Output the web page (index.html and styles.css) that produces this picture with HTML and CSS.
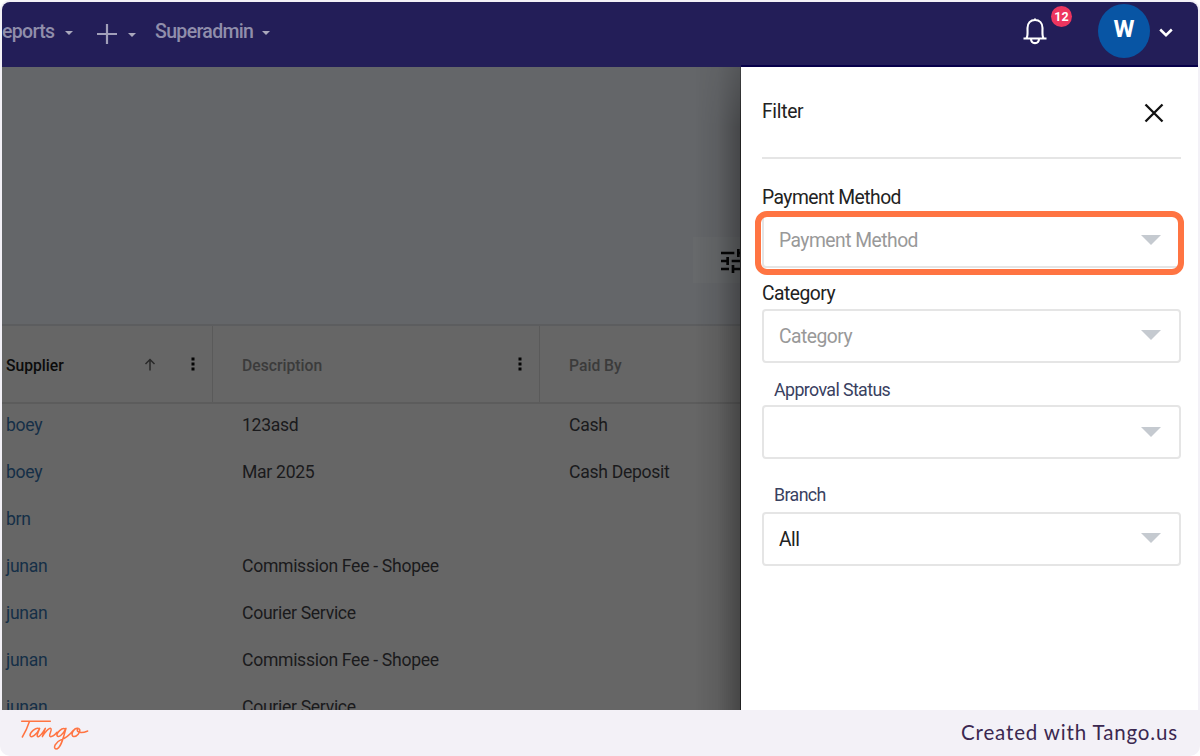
FILE: index.html
```html
<!DOCTYPE html>
<html lang="en">
<head>
<meta charset="utf-8">
<title>Filter</title>
<link rel="stylesheet" href="styles.css">
</head>
<body>
<div class="frame">
  <div class="app">
    <header class="nav">
      <div class="menu">
        <span class="menu-item reports">eports</span><i class="caret"></i>
        <svg class="plus" width="20" height="20" viewBox="0 0 20 20"><path d="M10 0V20M0 10H20"/></svg><i class="caret caret-low"></i>
        <span class="menu-item admin">Superadmin</span><i class="caret"></i>
      </div>
      <div class="account">
        <div class="bell">
          <svg width="24" height="28" viewBox="0 0 24 28"><path d="M.5 21.500H23.500M3.500 21C5 19 4.500 16 4.500 11C4.500 6 7.500 3 12 3S19.500 6 19.500 11C19.500 16 19 19 20.500 21M12 3V1.500M8 22C8.200 27.500 15.800 27.500 16 22"/></svg>
          <span class="badge">12</span>
        </div>
        <div class="avatar">W</div>
        <svg class="chevron" width="14" height="9" viewBox="0 0 14 9"><path d="M1.200 1.500L7 7.200L12.800 1.500"/></svg>
      </div>
    </header>
    <div class="content">
      <main class="page">
        <div class="toolbar">
          <div class="tune"><svg width="24" height="24" viewBox="3 3 18 18"><path d="M3 17v2h6v-2H3zM3 5v2h10V5H3zm10 16v-2h8v-2h-8v-2h-2v6h2zM7 9v2H3v2h4v2h2V9H7zm14 4v-2H11v2h10zm-6-4h2V7h4V5h-4V3h-2v6z"/></svg></div>
        </div>
        <div class="row head">
          <div class="cell supplier"><span>Supplier</span>
            <svg class="arrow" width="12" height="13" viewBox="0 0 12 13"><path d="M6 12.500V1.500M1.500 6L6 1.500L10.500 6"/></svg>
            <svg class="dots" width="4" height="14" viewBox="0 0 4 14"><path d="M.5 .5h3v3h-3zM.5 5.500h3v3h-3zM.5 10.500h3v3h-3z"/></svg></div>
          <div class="cell desc"><span>Description</span>
            <svg class="dots" width="4" height="14" viewBox="0 0 4 14"><path d="M.5 .5h3v3h-3zM.5 5.500h3v3h-3zM.5 10.500h3v3h-3z"/></svg></div>
          <div class="cell paid"><span>Paid By</span></div>
        </div>
        <div class="row"><a class="cell supplier">boey</a><div class="cell desc">123asd</div><div class="cell paid">Cash</div></div>
        <div class="row"><a class="cell supplier">boey</a><div class="cell desc">Mar 2025</div><div class="cell paid">Cash Deposit</div></div>
        <div class="row"><a class="cell supplier">brn</a><div class="cell desc"></div><div class="cell paid"></div></div>
        <div class="row"><a class="cell supplier">junan</a><div class="cell desc">Commission Fee - Shopee</div><div class="cell paid"></div></div>
        <div class="row"><a class="cell supplier">junan</a><div class="cell desc">Courier Service</div><div class="cell paid"></div></div>
        <div class="row"><a class="cell supplier">junan</a><div class="cell desc">Commission Fee - Shopee</div><div class="cell paid"></div></div>
        <div class="row"><a class="cell supplier">junan</a><div class="cell desc">Courier Service</div><div class="cell paid"></div></div>
      </main>
      <aside class="panel">
        <div class="panel-head"><span class="title">Filter</span>
          <svg width="20" height="20" viewBox="0 0 20 20"><path d="M1.500 1.500L18.500 18.500M18.500 1.500L1.500 18.500"/></svg></div>
        <div class="label">Payment Method</div>
        <div class="select highlight"><span class="hint">Payment Method</span><i class="tri"></i></div>
        <div class="label category">Category</div>
        <div class="select"><span class="hint">Category</span><i class="tri"></i></div>
        <div class="sub approval">Approval Status</div>
        <div class="select low"><span></span><i class="tri"></i></div>
        <div class="sub branch">Branch</div>
        <div class="select"><span>All</span><i class="tri"></i></div>
      </aside>
    </div>
  </div>
  <footer class="footer">
    <svg class="logo" width="70" height="34" viewBox="60 235 210 102"><path d="M65 245H151M88 246C82 265 74 280 67 292M118 267C108 261 90 278 90 287C93 299 112 283 119 266C113 280 108 292 115 291C122 290 130 276 136 266L127 291C134 279 148 262 153 267C157 272 143 290 152 291C159 291 167 283 171 278M196 268C186 262 169 280 171 288C175 297 190 283 198 266C192 285 184 328 168 328C158 326 166 307 184 300C201 294 212 282 221 271M234 266C221 264 212 284 219 290C229 294 244 276 238 268C231 264 228 276 240 278C250 280 258 276 263 274"/></svg>
    <span class="credit">Created with Tango.us</span>
  </footer>
</div>
</body>
</html>
```
FILE: styles.css
```css
* { box-sizing: border-box; }
body { margin: 0; background: #fff; font-family: Roboto, "Liberation Sans", sans-serif; }
svg { display: block; fill: none; flex: none; }
.frame { width: 1200px; height: 756px; padding: 2px 2px 0; background: #f3f1f7; border-radius: 10px; overflow: hidden; }
.app { height: 708px; border-radius: 8px 8px 0 0; overflow: hidden; }
.nav { height: 65px; background: linear-gradient(#07004a, #07004a) 739px 63px / 457px 2px no-repeat #231e58; display: flex; justify-content: space-between; }
.menu { display: flex; align-items: center; height: 59px; color: #908eab; font-size: 19.5px; font-weight: 500; letter-spacing: -.66px; }
.menu-item { white-space: nowrap; }
.reports { width: 63px; }
.admin { width: 107px; margin-left: 19px; }
.caret { border: 4.5px solid transparent; border-top: 4px solid #aaa8bc; border-bottom: 0; margin-top: 2px; }
.caret-low { margin-top: 6px; }
.plus { stroke: #a19fb9; stroke-width: 2.2; margin: 5px 11px 0 24px; }
.account { display: flex; align-items: center; height: 58px; padding-right: 25px; }
.bell { position: relative; stroke: #fff; stroke-width: 2.1; }
.badge { position: absolute; left: 28px; top: -11px; width: 21px; height: 21px; border-radius: 50%; background: #ed355f; color: #fff; font-size: 12.5px; font-weight: 700; line-height: 21px; text-align: center; }
.avatar { width: 52px; height: 54px; border-radius: 50%; margin: 0 9px 0 51px; background: #0855a4; color: #fff; font-size: 24px; font-weight: 700; line-height: 51px; text-align: center; }
.chevron { stroke: #fff; stroke-width: 2.5; margin-top: 3px; }
.content { display: flex; height: 643px; }
.page { position: relative; width: 739px; background: #666; overflow: hidden; font-size: 17.6px; letter-spacing: -.3px; }
.page::after { content: ""; position: absolute; inset: 0 0 0 auto; width: 45px; background: linear-gradient(90deg, transparent, rgba(0,0,0,.08) 50%, rgba(0,0,0,.3)); border-right: 1px solid #222; -webkit-mask-image: linear-gradient(rgba(0,0,0,.5), #000 60px); mask-image: linear-gradient(rgba(0,0,0,.5), #000 60px); }
.toolbar { height: 259px; padding-top: 170px; background: #646669; border-bottom: 2px solid #5c5d5f; display: flex; justify-content: flex-end; }
.tune { width: 48px; height: 46px; background: #67696b; padding: 12px 0 0 28px; overflow: hidden; }
.tune svg { fill: #050505; }
.row { display: flex; height: 47.15px; color: #1a1a1c; }
.cell { display: flex; align-items: center; height: 100%; padding-bottom: 4px; white-space: nowrap; }
.supplier { width: 211px; padding-left: 4px; color: #152f47; }
.desc { width: 327px; padding-left: 29px; }
.paid { width: 201px; padding-left: 29px; }
.head { height: 78px; font-size: 15.7px; letter-spacing: 0; font-weight: 500; color: #3b3b3b; border-bottom: 2px solid #5c5c5c; }
.head .cell { padding-bottom: 2px; }
.head .supplier { color: #0b0b0b; }
.head .supplier, .head .desc { border-right: 1.5px solid #5a5a5a; padding-right: 17px; }
.head .desc { width: 327px; }
.cell span { margin-right: auto; padding-top: 4px; }
.arrow { stroke: #292929; stroke-width: 1.5; margin: 2px 35px 0 0; }
.dots { fill: #050505; margin-top: 2px; }
.head + .row { margin-top: -1px; }
.panel { width: 457px; background: #fff; padding: 0 17px 0 21px; color: #222; font-size: 19.3px; letter-spacing: -.52px; }
.panel-head { display: flex; justify-content: space-between; align-items: center; height: 92px; padding-right: 17px; border-bottom: 2px solid #e5e5e5; }
.panel-head svg { stroke: #111; stroke-width: 2.3; margin-top: 1px; }
.title { padding-bottom: 1px; letter-spacing: -.3px; }
.label { height: 54px; padding-top: 27px; line-height: 24px; }
.category { height: 41px; padding-top: 14px; }
.select { height: 54px; border: 2px solid #e5e5e5; border-radius: 4px; padding: 0 18px 2px 15px; display: flex; justify-content: space-between; align-items: center; }
.select span { padding-top: 2px; }
.highlight { position: relative; height: 55px; }
.highlight::after { content: ""; position: absolute; inset: -4px -5px -9px -9px; border: 6px solid #ff7442; border-radius: 12px; }
.hint { color: #999; }
.tri { border: 10px solid transparent; border-top-color: #c5cad0; border-bottom: 0; }
.low .tri { margin-top: 2px; }
.sub { color: #39415f; font-size: 17.8px; letter-spacing: -.6px; padding-left: 12px; line-height: 24px; }
.approval { height: 42px; padding-top: 15px; }
.branch { height: 53px; padding-top: 24px; }
.footer { height: 46px; display: flex; justify-content: space-between; padding: 8px 20px 0 18px; }
.logo { stroke: #ff7442; stroke-width: 4.5; stroke-linecap: round; stroke-linejoin: round; }
.credit { font-family: Lato, sans-serif; font-size: 20.5px; letter-spacing: .85px; line-height: 28px; color: #3b2850; }
```
